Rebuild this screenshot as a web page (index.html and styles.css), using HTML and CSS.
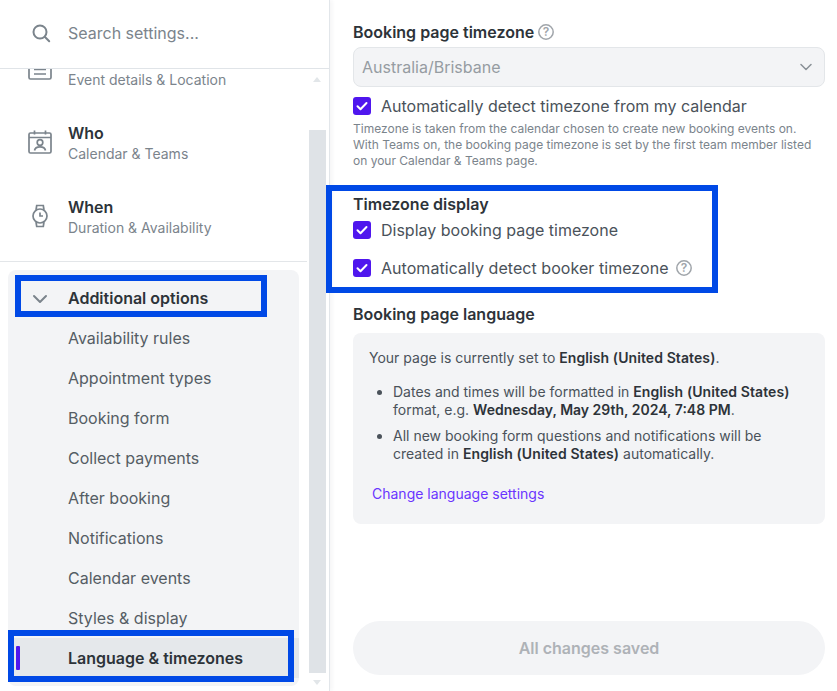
FILE: index.html
```html
<!DOCTYPE html>
<html lang="en">
<head>
<meta charset="utf-8">
<title>Language &amp; timezones</title>
<link rel="stylesheet" href="styles.css">
</head>
<body>
<div class="app">
  <aside class="sidebar">
    <div class="search">
      <svg class="search-icon" width="20" height="20" viewBox="0 0 20 20" fill="none" stroke="#7b848c" stroke-width="2" stroke-linecap="round"><circle cx="9" cy="9" r="6.5"/><path d="M14 14l4.2 4.2"/></svg>
      <span>Search settings...</span>
    </div>
    <div class="scroller">
      <div class="nav">
        <div class="section first">
          <svg class="section-icon" width="24" height="24" viewBox="0 0 24 24" fill="none" stroke="#7b848c" stroke-width="1.700"><rect x="1" y="1" width="22" height="22" rx="1.500"/><path d="M6 13.500h12M6 18h12"/></svg>
          <div class="section-text"><div class="section-sub">Event details &amp; Location</div></div>
        </div>
        <div class="section">
          <svg class="section-icon" width="24" height="24" viewBox="0 0 24 24" fill="none" stroke="#7b848c" stroke-width="1.700"><rect x="1" y="3" width="22" height="20" rx="1.500"/><path d="M1 7.500h22M6.500 .5v4M17.500 .5v4"/><circle cx="12" cy="12.500" r="2.800"/><path d="M6.500 20.500c.5-3 3-3.700 5.500-3.700s5 .7 5.500 3.700"/></svg>
          <div class="section-text"><div class="section-title">Who</div><div class="section-sub">Calendar &amp; Teams</div></div>
        </div>
        <div class="section">
          <svg class="section-icon" width="24" height="24" viewBox="0 0 24 24" fill="none" stroke="#7b848c" stroke-width="1.700"><circle cx="12" cy="12" r="7"/><path d="M8 6l.7-4.500h6.600L16 6M8 18l.7 4.500h6.600L16 18M12 8.500V12h3"/></svg>
          <div class="section-text"><div class="section-title">When</div><div class="section-sub">Duration &amp; Availability</div></div>
        </div>
        <div class="divider"></div>
        <div class="panel">
          <div class="panel-head">
            <svg width="16" height="10" viewBox="0 0 16 10" fill="none" stroke="#7b848c" stroke-width="2" stroke-linecap="round" stroke-linejoin="round"><path d="M2 2l6 6 6-6"/></svg>
            <span>Additional options</span>
            <div class="mark mark-head"></div>
          </div>
          <div class="panel-item">Availability rules</div>
          <div class="panel-item">Appointment types</div>
          <div class="panel-item">Booking form</div>
          <div class="panel-item">Collect payments</div>
          <div class="panel-item">After booking</div>
          <div class="panel-item">Notifications</div>
          <div class="panel-item">Calendar events</div>
          <div class="panel-item">Styles &amp; display</div>
          <div class="panel-item active">Language &amp; timezones<i class="active-bar"></i><div class="mark mark-active"></div></div>
        </div>
      </div>
      <div class="scrollbar">
        <i class="arrow up"></i>
        <div class="thumb"></div>
        <i class="arrow down"></i>
      </div>
    </div>
  </aside>

  <main class="main">
    <div class="label first-label">Booking page timezone
      <svg class="help" width="16" height="16" viewBox="0 0 16 16"><circle cx="8" cy="8" r="7.200" fill="none" stroke="#a0a5aa" stroke-width="1.500"/><text x="8" y="12" text-anchor="middle" class="help-q">?</text></svg>
    </div>
    <div class="select">
      <span>Australia/Brisbane</span>
      <svg width="12" height="8" viewBox="0 0 12 8" fill="none" stroke="#8a9197" stroke-width="1.500" stroke-linecap="round" stroke-linejoin="round"><path d="M1 1.500l5 5 5-5"/></svg>
    </div>
    <label class="check check-calendar">
      <svg class="box" width="18" height="18" viewBox="0 0 18 18"><rect width="18" height="18" rx="3" fill="#4f16ee"/><path d="M4.500 9.300l3 3 6-6.300" fill="none" stroke="#fff" stroke-width="2" stroke-linecap="round" stroke-linejoin="round"/></svg>
      <span>Automatically detect timezone from my calendar</span>
    </label>
    <p class="hint">Timezone is taken from the calendar chosen to create new booking events on. With Teams on, the booking page timezone is set by the first team member listed on your Calendar &amp; Teams page.</p>

    <section class="display">
      <div class="mark mark-display"></div>
      <div class="label">Timezone display</div>
      <label class="check check-one">
        <svg class="box" width="18" height="18" viewBox="0 0 18 18"><rect width="18" height="18" rx="3" fill="#4f16ee"/><path d="M4.500 9.300l3 3 6-6.300" fill="none" stroke="#fff" stroke-width="2" stroke-linecap="round" stroke-linejoin="round"/></svg>
        <span>Display booking page timezone</span>
      </label>
      <label class="check check-two">
        <svg class="box" width="18" height="18" viewBox="0 0 18 18"><rect width="18" height="18" rx="3" fill="#4f16ee"/><path d="M4.500 9.300l3 3 6-6.300" fill="none" stroke="#fff" stroke-width="2" stroke-linecap="round" stroke-linejoin="round"/></svg>
        <span>Automatically detect booker timezone</span>
        <svg class="help" width="16" height="16" viewBox="0 0 16 16"><circle cx="8" cy="8" r="7.200" fill="none" stroke="#a0a5aa" stroke-width="1.500"/><text x="8" y="12" text-anchor="middle" class="help-q">?</text></svg>
      </label>
    </section>

    <div class="label language-label">Booking page language</div>
    <div class="card">
      <p class="card-lead">Your page is currently set to <b class="lang">English (United States)</b>.</p>
      <ul class="card-list">
        <li>Dates and times will be formatted in <b class="lang">English (United States)</b> format, e.g. <b>Wednesday, May 29th, 2024, 7:48 PM</b>.</li>
        <li>All new booking form questions and notifications will be created in <b class="lang">English (United States)</b> automatically.</li>
      </ul>
      <a class="card-link" href="#">Change language settings</a>
    </div>
    <div class="save">All changes saved</div>
  </main>
</div>
</body>
</html>
```

FILE: styles.css
```css
* { box-sizing: border-box; }
html, body { margin: 0; height: 100%; }
body { font-family: Inter, "Liberation Sans", sans-serif; color: #2d3339; background: #fff; overflow: hidden; }
.app { display: flex; width: 837px; height: 691px; }

/* Sidebar */
.sidebar { width: 330px; height: 691px; flex: none; display: flex; flex-direction: column; border-right: 1px solid #e2e6ea; box-shadow: 2px 0 4px rgba(30, 40, 50, .05); }
.search { height: 69px; flex: none; display: flex; align-items: center; gap: 17px; padding: 0 0 2px 31px; border-bottom: 1px solid #e0e4e8; font-size: 16px; color: #7b848c; }
.search-icon { flex: none; }
.scroller { flex: 1; display: flex; min-height: 0; }
.nav { width: 307px; flex: none; }
.section { height: 74px; display: flex; align-items: center; gap: 16px; padding: 0 0 0 28px; }
.section.first { height: 37px; align-items: flex-start; overflow: hidden; }
.section.first .section-icon { margin-top: -13px; }
.section.first .section-text { margin-top: 1px; }
.section-icon { flex: none; margin-top: -2px; }
.section-title { font-size: 16px; line-height: 20px; font-weight: 600; color: #2d3339; }
.section-sub { font-size: 14px; line-height: 20px; color: #7b848c; }
.section-title + .section-sub { margin-top: 1px; }
.divider { height: 1px; margin-top: 7px; background: #e3e6e9; }
.panel { position: relative; width: 291px; margin: 8px 0 0 8px; padding: 8px 0; background: #f3f4f6; border-radius: 8px; }
.panel-head, .panel-item { position: relative; height: 40px; display: flex; align-items: center; padding-left: 60px; font-size: 16px; color: #555d64; }
.panel-head { font-weight: 600; color: #2d3339; }
.panel-head svg { position: absolute; left: 24px; top: 16px; }
.panel-item.active { font-weight: 600; color: #2d3339; background: #e5e8eb; }
.active-bar { position: absolute; left: 8px; top: 8px; width: 4px; height: 24px; background: #4f16ee; border-radius: 1px; }

/* Scrollbar */
.scrollbar { width: 22px; flex: none; position: relative; display: flex; flex-direction: column; align-items: center; }
.thumb { position: absolute; left: 2px; top: 61px; width: 17px; height: 543px; background: #dfe3e7; }
.arrow { position: absolute; left: 6px; width: 0; height: 0; border-left: 4.500px solid transparent; border-right: 4.500px solid transparent; }
.arrow.up { top: 8px; border-bottom: 5px solid #e2e6e9; }
.arrow.down { top: 611px; border-top: 5px solid #e2e6e9; }

/* Annotation rectangles */
.mark { position: absolute; border: 6px solid #0049e6; pointer-events: none; }
.mark-head { left: 7px; top: -3px; width: 252px; height: 42px; }
.mark-active { left: 0; top: -8px; width: 286px; height: 52px; }
.mark-display { left: -27px; top: -9px; width: 392px; height: 108px; }

/* Main */
.main { flex: 1; padding: 22px 12px 0 23px; min-width: 0; }
.label { font-size: 16px; line-height: 20px; font-weight: 600; color: #2d3339; display: flex; align-items: center; gap: 4px; }
.help { flex: none; }
.help-q { font-size: 12px; font-weight: 600; fill: #a0a5aa; font-family: Inter, sans-serif; }
.select { height: 40px; margin-top: 5px; display: flex; align-items: center; justify-content: space-between; padding: 0 12px 0 8px; background: #f3f4f6; border: 1px solid #e3e6e9; border-radius: 8px; font-size: 16px; color: #969ca2; }
.check { display: flex; align-items: center; gap: 10px; font-size: 16px; line-height: 20px; color: #4a525a; }
.box { flex: none; }
.check-calendar { margin-top: 9px; }
.hint { margin: 5px 0 0; width: 472px; font-size: 12px; line-height: 16px; color: #7b848c; }
.display { position: relative; margin-top: 25px; }
.check-one { margin-top: 6px; }
.check-two { margin-top: 18px; letter-spacing: .05px; }
.check-two .help { margin-left: -3px; }
.language-label { margin-top: 26px; }
.card { margin-top: 9px; height: 191px; padding: 16px 16px; background: #f3f4f6; border-radius: 8px; font-size: 14px; line-height: 18px; color: #4a525a; }
.card b { font-weight: 600; color: #2d3339; }
.card b.lang { letter-spacing: .09px; }
.card-lead { margin: 0; }
.card-list { margin: 16px 0 0; padding: 0 0 0 24px; }
.card-list li + li { margin-top: 8px; }
.card-link { display: block; margin: 22px 0 0 3px; font-size: 14px; color: #6a35ff; text-decoration: none; }
.save { margin-top: 97px; height: 54px; display: flex; align-items: center; justify-content: center; background: #f3f4f6; border-radius: 27px; font-size: 16px; font-weight: 600; color: #aeb2b7; }
```
